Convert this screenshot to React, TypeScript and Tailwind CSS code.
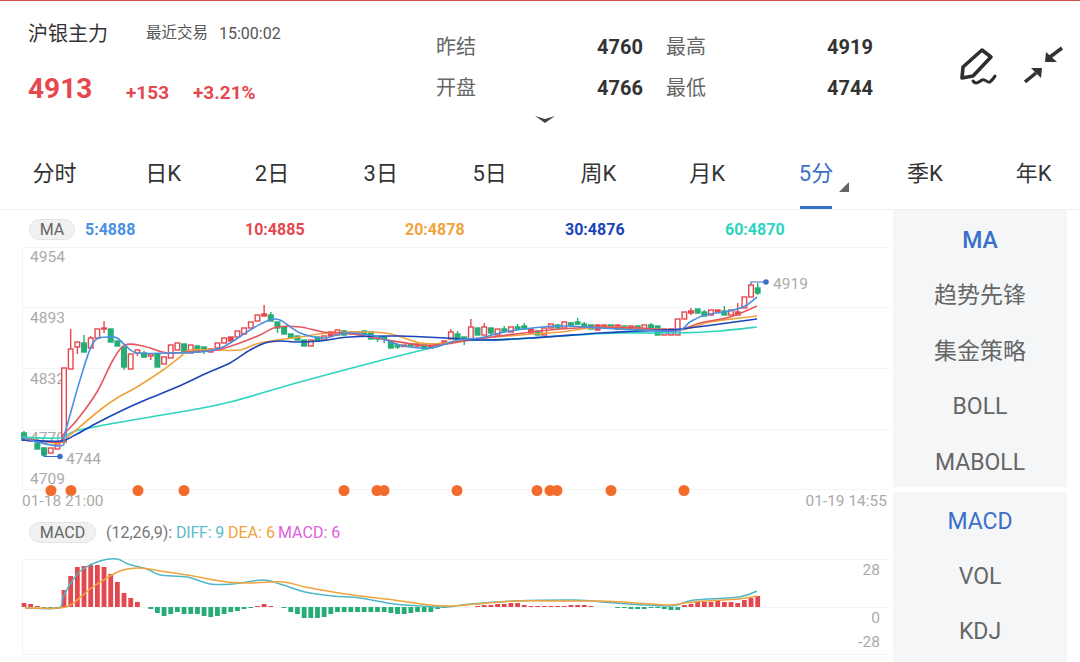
import React from "react";

type C = [string, number, number, number?, number?];
const candles: C[] = [
  ["g",433,440,431],["f",439,441],["g",443,449],["g",448,455,447,456],["o",448,453],["o",444,449],["o",368,442],["o",349,369,329],["o",342,347,342,354],["g",343,352,335],
  ["o",338,348,336],["o",329,338],["f",328,329,321,333],["g",329,342],["g",341,346],["g",347,367,347,370],["o",354,369],["o",350,353,350,356],["g",353,357,351,358],["o",354,356,354,360],
  ["g",354,367],["o",357,364],["o",345,358],["o",343,350],["g",344,353],["o",345,353],["g",346,352],["g",347,351,347,354],["o",349,352],["o",343,348],
  ["o",338,343],["f",337,341],["o",331,337],["o",328,334],["o",322,328],["o",315,321],["f",314,316,305],["g",315,321,312],["g",322,328,322,333],["g",327,334],
  ["g",334,338],["g",336,340],["g",340,346],["o",340,346],["g",337,341],["o",336,340],["f",332,336],["o",330,335],["g",331,335,330],["f",332,334],
  ["f",332,334],["g",331,334],["g",332,339],["g",337,339,336,342],["g",337,339,337,343],["g",341,348],["g",345,347,345,349],["f",345,346.5],["g",344,346],["f",344,346,344,347],
  ["g",345,348],["f",346,347.5],["f",344,346],["f",341,344],["o",332,339,329],["g",334,339,331],["g",337,339,337,345],["o",327,339,319],["g",328,335],["o",327,335,323],
  ["g",328,333,328,335],["o",329,335],["g",329,331,326,332],["o",327,332],["g",327,329,324,330],["g",326,329,323],["f",329,333],["g",331,335],["o",328,335],["o",324,328],
  ["g",325,328,324],["o",322,328],["g",323,325,322,327],["g",322,324,318,325],["g",324,326,322,327],["g",325,329],["f",325,330],["f",325,328],["g",325,328],["f",325,329],
  ["g",326,329],["f",326,329],["g",326,330],["o",325,330],["g",325,329,323],["g",326,335],["o",329,335],["o",329,335],["o",319,335],["o",312,319],
  ["f",311,313,308,315],["g",309,313],["g",312,316,310],["o",310,315],["f",310,312],["g",311,315,306],["o",310,315],["f",312,315,303],["o",297,308],["o",285,297],
  ["g",288,293,283,295],
];

const bars = [4,3,1,-1,-2,-2,17,31,40,41,42,42,40,33,25,14,9,5,0,-2,-6,-9,-7,-5,-7,-7,-7,-9,-10,-9,-7,-5,-4,-2,-1,1,3,1,0,-1,-5,-7,-11,-11,-11,-10,-7,-5,-5,-5,-5,-5,-5,-5,-5,-6,-7,-7,-6,-5,-5,-5,-2,-1,0,0,0,0,1,2,2,3,3,4,4,2,1,1,1,1,1,1,2,2,2,1,0,0,0,-1,-1,-2,-2,-2,-1,-1,-2,-3,-3,2,3,5,5,5,6,5,5,4,7,9,11];

type P = [number, number];
const smooth = (p: P[]) => {
  let d = `M${p[0][0]},${p[0][1]}`;
  for (let i = 0; i < p.length - 1; i++) {
    const a = p[Math.max(i - 1, 0)], b = p[i], c = p[i + 1], e = p[Math.min(i + 2, p.length - 1)];
    d += ` C${(b[0] + (c[0] - a[0]) / 6).toFixed(1)},${(b[1] + (c[1] - a[1]) / 6).toFixed(1)} ${(c[0] - (e[0] - b[0]) / 6).toFixed(1)},${(c[1] - (e[1] - b[1]) / 6).toFixed(1)} ${c[0]},${c[1]}`;
  }
  return d;
};

const ma60: P[] = [[22,437],[60,438],[75,431],[115,423],[180,412],[230,402],[300,382],[375,362],[427,349],[460,341],[500,340],[560,336],[620,333],[680,333],[720,331],[757,327]];
const ma30: P[] = [[22,440],[60,441],[75,435],[97,423],[123,410],[150,398],[177,387],[207,373],[230,363],[250,350],[265,343],[280,341],[298,342],[320,341],[350,337],[400,336],[445,338],[480,340],[530,338],[600,333],[640,331],[680,329],[720,324],[757,319]];
const ma20: P[] = [[22,438],[60,443],[70,435],[100,410],[117,398],[137,387],[163,370],[180,357],[190,350],[217,350],[240,350],[260,343],[300,337],[330,333],[385,333],[420,343],[445,343],[470,339],[520,335],[560,332],[600,327],[640,328],[680,330],[710,322],[740,318],[757,316]];
const ma10: P[] = [[22,440],[60,442],[63,435],[77,420],[97,392],[113,360],[125,345],[143,346],[167,353],[187,352],[217,350],[240,343],[260,335],[277,327],[300,327],[323,332],[345,333],[370,337],[420,345],[445,344],[470,340],[500,336],[550,330],[600,327],[640,328],[677,330],[700,323],[730,317],[757,306]];
const ma5: P[] = [[22,438],[60,446],[65,433],[80,380],[93,343],[107,337],[117,338],[125,345],[137,353],[167,353],[200,352],[223,347],[250,330],[267,321],[280,320],[300,333],[325,338],[345,333],[375,336],[400,345],[430,348],[458,340],[480,338],[510,331],[560,326],[600,328],[640,330],[677,331],[690,322],[705,315],[730,311],[745,306],[757,297]];

const diff: P[] = [[25,609],[58,609],[63,598],[72,582],[83,570],[100,562],[117,560],[128,565],[147,570],[160,576],[187,578],[210,585],[233,585],[263,581],[283,586],[305,593],[333,597],[360,599],[394,605],[422,607],[446,608],[470,605],[515,602],[574,601],[615,604],[663,607],[677,606],[694,601],[739,598],[757,592]];
const dea: P[] = [[25,609],[58,609],[72,605],[90,590],[110,577],[123,571],[140,569],[167,573],[193,577],[220,582],[243,584],[283,583],[305,588],[333,593],[360,597],[394,601],[429,606],[450,607],[477,605],[515,602],[567,602],[601,602],[636,604],[670,606],[684,604],[705,602],[739,600],[757,597]];

const dots = [51,71,138,184,344,377,384,457,537,550,557,611,684];
const RED = "#e5474f", GREEN = "#25ad75";
const tabs = ["分时","日K","2日","3日","5日","周K","月K","5分","季K","年K"];
const maVals: [string, string][] = [["5:4888","text-[#4a90e2]"],["10:4885","text-[#e5474f]"],["20:4878","text-[#f0a33c]"],["30:4876","text-[#1a45b8]"],["60:4870","text-[#2dd4bf]"]];

const Stat = ({ label, value }: { label: string; value: string }) => (
  <div className="flex justify-between items-center h-[41px]">
    <span className="text-[20px] text-[#666666]">{label}</span>
    <span className="text-[20px] font-bold text-[#333333]">{value}</span>
  </div>
);

const Pill = ({ children, w }: { children: string; w: string }) => (
  <span className={`${w} h-[21px] flex items-center justify-center rounded-full bg-[#f1f1f1] border border-[#e4e4e4] text-[16px] text-[#666666]`}>{children}</span>
);

const SideItem = ({ children, color, h }: { children: string; color?: string; h: string }) => (
  <div className={`${h} pt-[5px] flex items-center justify-center text-[23px] ${color ?? "text-[#666666]"}`}>{children}</div>
);

export default function App() {
  return (
    <div className="w-[1080px] h-[662px] overflow-hidden bg-white flex flex-col [font-family:Roboto,'Noto_Sans_CJK_SC',sans-serif]">
      <div className="h-px bg-[#cf4f4f] shrink-0" />
      {/* quote header */}
      <div className="flex h-[106px] shrink-0">
        <div className="w-[436px] pl-[28px] pt-[21px]">
          <div className="flex items-center h-[24px]">
            <span className="text-[20px] text-[#333333] w-[118px]">沪银主力</span>
            <span className="text-[15.5px] text-[#555555] w-[73px]">最近交易</span>
            <span className="text-[16px] text-[#555555]">15:00:02</span>
          </div>
          <div className="flex items-end h-[45px] mt-[16px] text-[#e5474f] font-bold">
            <span className="text-[28px] leading-[36px] w-[98px]">4913</span>
            <span className="text-[19px] leading-[28px] w-[67px]">+153</span>
            <span className="text-[19px] leading-[28px]">+3.21%</span>
          </div>
        </div>
        <div className="w-[437px] pt-[25px] grid grid-cols-2 gap-x-[23px] content-start">
          <Stat label="昨结" value="4760" />
          <Stat label="最高" value="4919" />
          <Stat label="开盘" value="4766" />
          <Stat label="最低" value="4744" />
        </div>
        <div className="ml-[87px] pt-[45px] flex gap-[24px] items-start">
          <svg width="40" height="40" viewBox="960 46 40 40">
            <path d="M982,50 L991,57 L973,76 L962,78 L963,67 Z" fill="none" stroke="#2e2e2e" strokeWidth="3.6" strokeLinejoin="round" />
            <path d="M973,81 C976,85 979,82 982,80 S988,84 990,82 S994,78 995,76" fill="none" stroke="#2e2e2e" strokeWidth="3" strokeLinecap="round" />
          </svg>
          <svg width="40" height="40" viewBox="1024 46 40 40">
            <path d="M1045,62 L1046,52 L1057,62 Z" fill="#333" />
            <path d="M1050,57 L1062,48" stroke="#333" strokeWidth="3.5" />
            <path d="M1042,68 L1031,68 L1041,78 Z" fill="#333" />
            <path d="M1036,73 L1025,82" stroke="#333" strokeWidth="3.5" />
          </svg>
        </div>
      </div>
      <div className="h-[38px] shrink-0 flex justify-center pl-[10px] pt-[8px]">
        <svg width="20" height="9" viewBox="0 0 20 9">
          <path d="M0,1 L10,4 L20,1 L10,8 Z" fill="#444" />
        </svg>
      </div>
      {/* period tabs */}
      <div className="h-[65px] shrink-0 border-b border-[#eef0f2]">
        <div className="w-[1088px] grid grid-cols-10">
          {tabs.map((t, i) => (
            <div key={t} className={`relative h-[64px] flex justify-center pt-[15px] text-[22px] leading-[28px] ${i === 7 ? "text-[#3a6fc8]" : "text-[#333333]"}`}>
              {t}
              {i === 7 && (
                <>
                  <span className="absolute bottom-0 left-1/2 -translate-x-1/2 w-[32px] h-[3px] bg-[#3a6fc8]" />
                  <span className="absolute top-[37px] left-[77px] w-0 h-0 border-l-[10px] border-l-transparent border-b-[10px] border-b-[#666666]" />
                </>
              )}
            </div>
          ))}
        </div>
      </div>
      {/* chart zone */}
      <div className="flex flex-1 min-h-0">
        <div className="w-[893px] shrink-0 flex flex-col">
          <div className="h-[37px] shrink-0 flex items-start pt-[9px] pl-[29px]">
            <Pill w="w-[46px]">MA</Pill>
            <div className="flex ml-[10px] h-[21px] items-center text-[16px] font-bold">
              {maVals.map(([t, c]) => (
                <span key={t} className={`w-[160px] ${c}`}>{t}</span>
              ))}
            </div>
          </div>
          <svg width="893" height="250" viewBox="0 247 893 250" className="shrink-0 block">
            {[247.5,307.5,368.5,429.5,489.5].map((y) => (
              <line key={y} x1="22" x2="890" y1={y} y2={y} stroke="#f4f5f6" />
            ))}
            <line x1="22.5" x2="22.5" y1="247" y2="490" stroke="#f1f2f3" />
            <g fontSize="15.5" fill="#aaaaaa" fontFamily="Roboto, sans-serif">
              <text x="30" y="262">4954</text>
              <text x="30" y="323">4893</text>
              <text x="30" y="384">4832</text>
              <text x="30" y="443">4770</text>
              <text x="30" y="484">4709</text>
              <text x="66" y="464">4744</text>
              <text x="773" y="289">4919</text>
            </g>
            {candles.map(([t, bt, bb, wt, wb], i) => {
              const x = 24 + 6.67 * i;
              const col = t === "g" ? GREEN : RED;
              return (
                <g key={i}>
                  <line x1={x} x2={x} y1={wt ?? bt} y2={wb ?? bb} stroke={col} strokeWidth="1.4" />
                  <rect x={x - 2.3} y={bt} width="4.6" height={bb - bt} fill={t === "o" ? "#ffffff" : col} stroke={col} strokeWidth="1.4" />
                </g>
              );
            })}
            <path d={smooth(ma60)} fill="none" stroke="#2dd4bf" strokeWidth="1.6" />
            <path d={smooth(ma20)} fill="none" stroke="#f0a33c" strokeWidth="1.6" />
            <path d={smooth(ma10)} fill="none" stroke="#e5575c" strokeWidth="1.6" />
            <path d={smooth(ma30)} fill="none" stroke="#1a45b8" strokeWidth="1.6" />
            <path d={smooth(ma5)} fill="none" stroke="#4a90e2" strokeWidth="1.6" />
            <path d="M44,452 L44,456.5 L60,456.5" fill="none" stroke="#3a6fc8" strokeWidth="1.2" />
            <circle cx="60" cy="456.5" r="2.8" fill="#3a6fc8" />
            <path d="M751,285 L751,282 L766,282" fill="none" stroke="#3a6fc8" strokeWidth="1.2" />
            <circle cx="766" cy="282" r="2.8" fill="#3a6fc8" />
            {dots.map((x) => (
              <circle key={x} cx={x} cy="490.5" r="5.5" fill="#f26c2b" />
            ))}
          </svg>
          <div className="-mt-[4px] h-[16px] leading-[16px] flex justify-between pl-[22px] pr-[6px] text-[15.5px] text-[#aaaaaa] shrink-0">
            <span>01-18 21:00</span>
            <span>01-19 14:55</span>
          </div>
          <div className="h-[46px] shrink-0 flex items-start pt-[13px] pl-[29px]">
            <Pill w="w-[67px]">MACD</Pill>
            <div className="ml-[10px] h-[21px] flex items-center text-[16px]">
              <span className="text-[#777777] w-[70px]">(12,26,9):</span>
              <span className="text-[#5bbccc] w-[52px] tracking-[-0.2px]">DIFF: 9</span>
              <span className="text-[#f0a33c] w-[50px]">DEA: 6</span>
              <span className="text-[#e060dc]">MACD: 6</span>
            </div>
          </div>
          <svg width="893" height="106" viewBox="0 556 893 106" className="shrink-0 block">
            {[560.5,608.5,655.5].map((y) => (
              <line key={y} x1="22" x2="890" y1={y} y2={y} stroke="#f4f5f6" />
            ))}
            <line x1="22.5" x2="22.5" y1="560" y2="656" stroke="#f1f2f3" />
            {bars.map((v, i) => {
              if (v === 0) return null;
              const x = 24 + 6.67 * i - 2.4;
              return <rect key={i} x={x} y={v > 0 ? 608 - v : 608} width="4.8" height={Math.abs(v)} fill={v > 0 ? RED : GREEN} />;
            })}
            <path d={smooth(diff)} fill="none" stroke="#4fb8c8" strokeWidth="1.5" />
            <path d={smooth(dea)} fill="none" stroke="#f0a33c" strokeWidth="1.5" />
            <g fontSize="15.5" fill="#aaaaaa" textAnchor="end" fontFamily="Roboto, sans-serif">
              <text x="880" y="576">28</text>
              <text x="880" y="624">0</text>
              <text x="880" y="648">-28</text>
            </g>
          </svg>
        </div>
        <div className="w-[174px] shrink-0 flex flex-col">
          <div className="h-[277px] pt-px bg-[#f5f6f8] shrink-0">
            <SideItem color="text-[#3a6fc8] font-medium" h="h-[55.4px]">MA</SideItem>
            <SideItem h="h-[55.4px]">趋势先锋</SideItem>
            <SideItem h="h-[55.4px]">集金策略</SideItem>
            <SideItem h="h-[55.4px]">BOLL</SideItem>
            <SideItem h="h-[55.4px]">MABOLL</SideItem>
          </div>
          <div className="mt-[5px] flex-1 bg-[#f5f6f8]">
            <SideItem color="text-[#3a6fc8]" h="h-[55px]">MACD</SideItem>
            <SideItem h="h-[55px]">VOL</SideItem>
            <SideItem h="h-[55px]">KDJ</SideItem>
          </div>
        </div>
      </div>
    </div>
  );
}
